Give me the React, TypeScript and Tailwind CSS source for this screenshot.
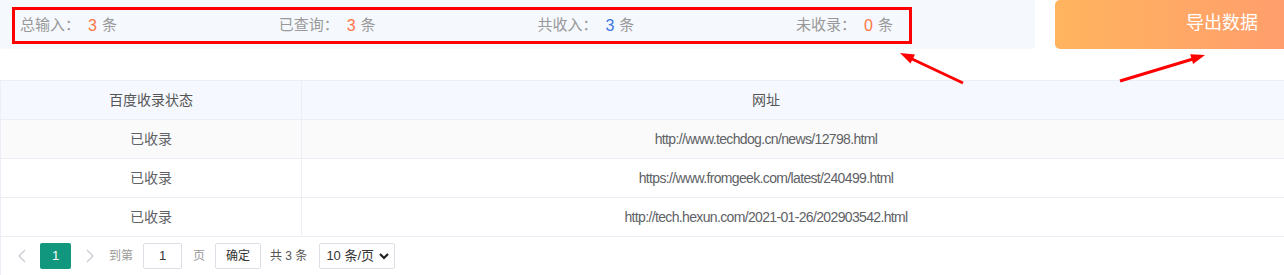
import React from "react";

const FONT = '"Liberation Sans", "Noto Sans CJK SC", sans-serif';

function Stat({ label, value, color }: { label: string; value: string; color: string }) {
  return (
    <div className="flex items-center text-[15px] text-[#999999] whitespace-nowrap">
      <span>{label}</span>
      <span className={`ml-[8px] text-[16px] ${color}`}>{value}</span>
      <span className="ml-[5px]">条</span>
    </div>
  );
}

const rows = [
  { status: "已收录", url: "http://www.techdog.cn/news/12798.html", bg: "bg-[#fafafa]" },
  { status: "已收录", url: "https://www.fromgeek.com/latest/240499.html", bg: "bg-white" },
  { status: "已收录", url: "http://tech.hexun.com/2021-01-26/202903542.html", bg: "bg-white" },
];

export default function App() {
  return (
    <div className="relative w-[1284px] h-[275px] overflow-hidden bg-white" style={{ fontFamily: FONT }}>
      {/* top bar */}
      <div className="flex h-[49px]">
        <div className="w-[1035px] bg-[#f5f8fd] rounded-b-[4px] pt-[7px] pl-[12px]">
          <div className="w-[900px] h-[37px] border-[3px] border-[#ff0000] flex items-center justify-between pl-[5px] pr-[16px]">
            <Stat label="总输入：" value="3" color="text-[#ff7547]" />
            <Stat label="已查询：" value="3" color="text-[#ff7547]" />
            <Stat label="共收入：" value="3" color="text-[#3f78e0]" />
            <Stat label="未收录：" value="0" color="text-[#ff7547]" />
          </div>
        </div>
        <div className="ml-[20px] flex-1 rounded-l-[5px] bg-gradient-to-r from-[#ffb45e] to-[#ff9e6c] flex items-center pl-[131px] pb-[2px] text-white text-[18px]">
          导出数据
        </div>
      </div>

      {/* table */}
      <div className="mt-[31px] border-t border-[#ebeef5] text-[14px] text-[#606266]">
        <div className="grid grid-cols-[302px_1fr] h-[39px] bg-[#f5f9ff] border-b border-[#ebeef5] text-[#555555]">
          <div className="flex items-center justify-center border-l border-r border-[#ebeef5]">百度收录状态</div>
          <div className="flex items-center justify-center pr-[54px]">网址</div>
        </div>
        {rows.map((r, i) => (
          <div key={i} className={`grid grid-cols-[302px_1fr] h-[39px] border-b border-[#ebeef5] ${r.bg}`}>
            <div className="flex items-center justify-center border-l border-r border-[#ebeef5]">{r.status}</div>
            <div className="flex items-center justify-center pr-[54px] text-[14px] tracking-[-0.65px]">{r.url}</div>
          </div>
        ))}
        {/* pagination */}
        <div className="flex items-center h-[38px] border-l border-[#ebeef5] text-[12px]">
          <span className="ml-[16px] w-[12px]">
            <svg width="10" height="14" viewBox="0 0 10 14"><path d="M8 1 L2 7 L8 13" fill="none" stroke="#c8cbd2" strokeWidth="1.3" /></svg>
          </span>
          <div className="ml-[11px] w-[31px] h-[26px] rounded-[2px] bg-[#12977f] text-white flex items-center justify-center text-[13px]">1</div>
          <span className="ml-[14px] w-[12px]">
            <svg width="10" height="14" viewBox="0 0 10 14"><path d="M2 1 L8 7 L2 13" fill="none" stroke="#c8cbd2" strokeWidth="1.3" /></svg>
          </span>
          <span className="ml-[12px] text-[#999999] text-[12px]">到第</span>
          <div className="ml-[10px] w-[39px] h-[26px] border border-[#dcdfe6] rounded-[2px] flex items-center justify-center text-[#333] text-[13px]">1</div>
          <span className="ml-[11px] text-[#999999] text-[12px]">页</span>
          <div className="ml-[10px] w-[46px] h-[26px] border border-[#dcdfe6] rounded-[2px] flex items-center justify-center text-[#333] text-[12px]">确定</div>
          <span className="ml-[9px] text-[#555] text-[12px]">共 3 条</span>
          <div className="ml-[12px] w-[76px] h-[26px] border border-[#dcdfe6] rounded-[2px] flex items-center pl-[6px] text-[#333] text-[13px]">
            <span>10 条/页</span>
            <svg className="ml-[5px]" width="10" height="8" viewBox="0 0 10 8"><path d="M1 2 L5 6 L9 2" fill="none" stroke="#222" strokeWidth="2.2" /></svg>
          </div>
        </div>
      </div>

      {/* annotation arrows */}
      <svg className="absolute left-0 top-0 pointer-events-none" width="1284" height="275">
        <line x1="963" y1="83" x2="911" y2="58.5" stroke="#ff0000" strokeWidth="3" />
        <polygon points="900,53 915,54.5 910.5,63.5" fill="#ff0000" />
        <line x1="1120" y1="81" x2="1193" y2="59" stroke="#ff0000" strokeWidth="3" />
        <polygon points="1205,55 1193.1,63.9 1190.2,54.3" fill="#ff0000" />
      </svg>
    </div>
  );
}
